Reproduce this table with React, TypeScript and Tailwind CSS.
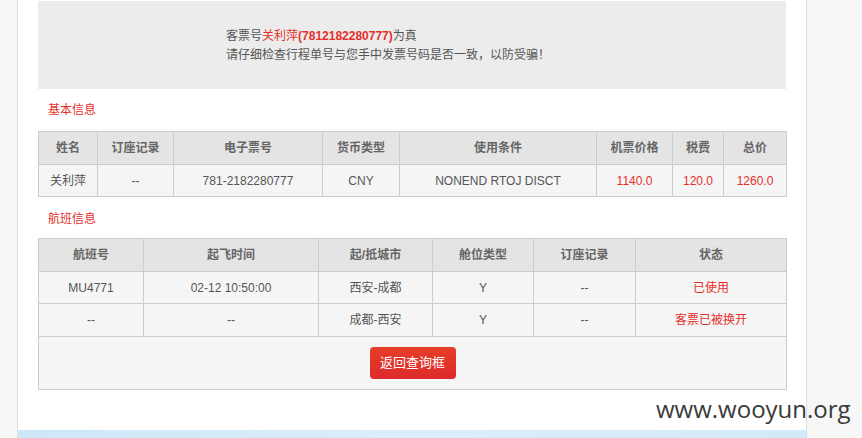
import React from "react";

const font = { fontFamily: '"Liberation Sans", "Noto Sans CJK SC", sans-serif' };

const basicHead = ["姓名", "订座记录", "电子票号", "货币类型", "使用条件", "机票价格", "税费", "总价"];
const basicCols = [59, 76, 149, 77, 197, 76, 51, 63];
const flightHead = ["航班号", "起飞时间", "起/抵城市", "舱位类型", "订座记录", "状态"];
const flightCols = [105, 175, 114, 101, 102, 151];

const flights = [
  { no: "MU4771", time: "02-12 10:50:00", city: "西安-成都", cabin: "Y", pnr: "--", status: "已使用" },
  { no: "--", time: "--", city: "成都-西安", cabin: "Y", pnr: "--", status: "客票已被换开" },
];

export default function App() {
  return (
    <div
      className="relative flex h-[438px] w-[862px] overflow-hidden bg-[#f7f7f7] text-[12px] text-[#555]"
      style={font}
    >
      <div className="w-[17px] shrink-0" />
      <div className="flex w-[790px] shrink-0 flex-col border-x border-[#dddddd] bg-white">
        <div className="pl-5 pt-[1px]">
          {/* 验证结果 */}
          <div className="h-[88px] w-[748px] bg-[#ececec] pl-[188px] pt-[26px] leading-[19px]">
            <p>
              客票号<span className="text-[#e5302a]">关利萍</span>
              <span className="font-bold text-[#e5302a]">(7812182280777)</span>为真
            </p>
            <p>请仔细检查行程单号与您手中发票号码是否一致，以防受骗！</p>
          </div>

          <h4 className="pl-[10px] pt-[13px] text-[#e5302a] leading-[16px]">基本信息</h4>
          <table className="mt-[13px] w-[748px] table-fixed border-collapse border border-[#cccccc] text-center">
            <colgroup>
              {basicCols.map((w, i) => (
                <col key={i} style={{ width: w }} />
              ))}
            </colgroup>
            <thead>
              <tr className="h-[33px] bg-[#e4e4e4] font-bold text-[#666]">
                {basicHead.map((h) => (
                  <th key={h} className="border border-[#cccccc] p-0">
                    {h}
                  </th>
                ))}
              </tr>
            </thead>
            <tbody>
              <tr className="h-[32px] bg-[#f5f5f5]">
                <td className="border border-[#cccccc]">关利萍</td>
                <td className="border border-[#cccccc]">--</td>
                <td className="border border-[#cccccc]">781-2182280777</td>
                <td className="border border-[#cccccc]">CNY</td>
                <td className="border border-[#cccccc]">NONEND RTOJ DISCT</td>
                <td className="border border-[#cccccc] text-[#e5302a]">1140.0</td>
                <td className="border border-[#cccccc] text-[#e5302a]">120.0</td>
                <td className="border border-[#cccccc] text-[#e5302a]">1260.0</td>
              </tr>
            </tbody>
          </table>

          <h4 className="pl-[10px] pt-[14px] text-[#e5302a] leading-[16px]">航班信息</h4>
          <table className="mt-[11px] w-[748px] table-fixed border-collapse border border-[#cccccc] text-center">
            <colgroup>
              {flightCols.map((w, i) => (
                <col key={i} style={{ width: w }} />
              ))}
            </colgroup>
            <thead>
              <tr className="h-[33px] bg-[#e4e4e4] font-bold text-[#666]">
                {flightHead.map((h) => (
                  <th key={h} className="border border-[#cccccc] p-0">
                    {h}
                  </th>
                ))}
              </tr>
            </thead>
            <tbody>
              {flights.map((f, i) => (
                <tr key={i} className={`bg-[#f5f5f5] ${i === 0 ? "h-[32px]" : "h-[33px]"}`}>
                  <td className="border border-[#cccccc]">{f.no}</td>
                  <td className="border border-[#cccccc]">{f.time}</td>
                  <td className="border border-[#cccccc]">{f.city}</td>
                  <td className="border border-[#cccccc]">{f.cabin}</td>
                  <td className="border border-[#cccccc]">{f.pnr}</td>
                  <td className="border border-[#cccccc] text-[#e5302a]">{f.status}</td>
                </tr>
              ))}
              <tr className="h-[53px] bg-[#f5f5f5]">
                <td colSpan={6} className="border border-[#cccccc] p-0">
                  <button className="h-[32px] w-[86px] rounded-[4px] bg-gradient-to-b from-[#e63d28] to-[#dc2a2a] text-[13px] text-white">
                    返回查询框
                  </button>
                </td>
              </tr>
            </tbody>
          </table>
        </div>
        <div className="flex-1" />
        <div className="h-[8px] bg-gradient-to-r from-[#cde7f9] via-[#dcedfa] to-[#d3e9f9]" />
      </div>

      <span
        className="absolute left-[656px] top-[394px] text-[24px] leading-[30px] text-[#3a3a3a]"
        style={{ fontFamily: '"Open Sans", sans-serif' }}
      >
        www.wooyun.org
      </span>
    </div>
  );
}
